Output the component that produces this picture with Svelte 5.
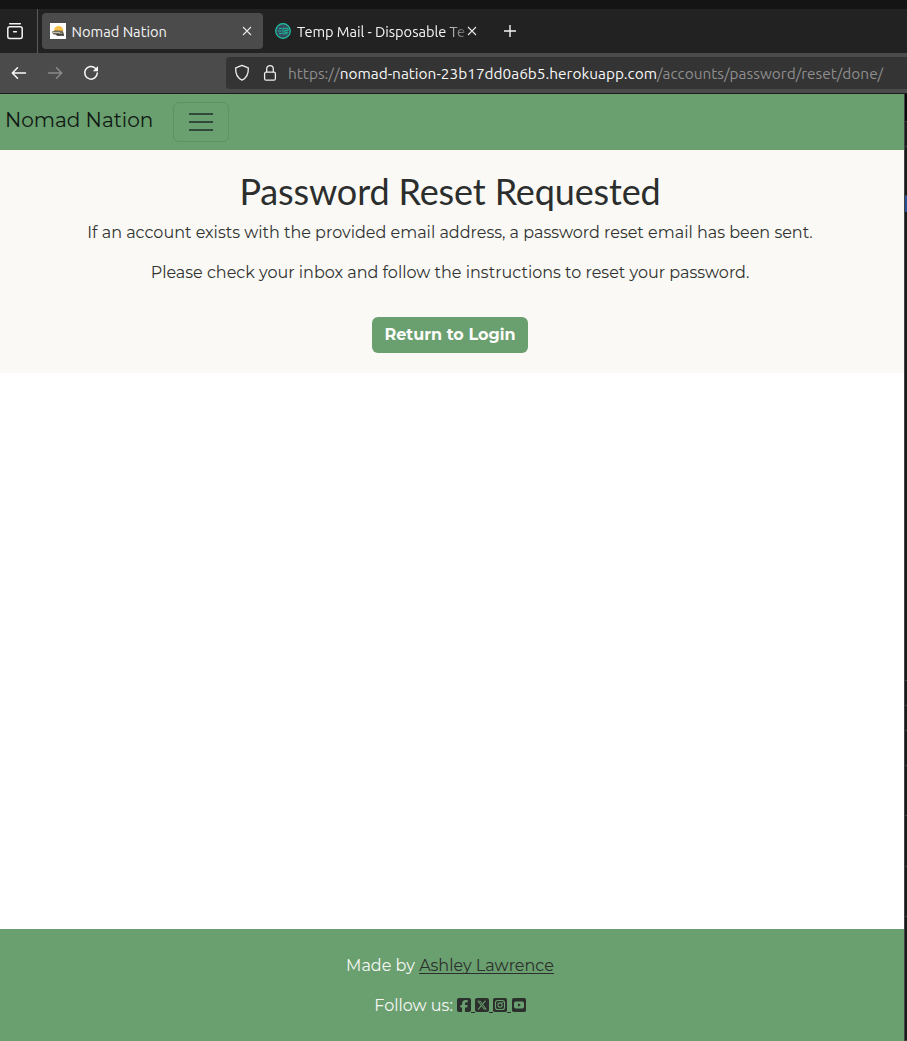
<script>
  const socials = ['facebook', 'x', 'instagram', 'youtube'];
</script>

<div class="window">
  <div class="strip"></div>
  <div class="tabs">
    <div class="recent">
      <svg width="18" height="18" viewBox="0 0 18 18" fill="none" stroke="#f4f4f4" stroke-width="1.5" stroke-linecap="round">
        <path d="M3.7 1.7h10.600" /><rect x="1.8" y="4.700" width="14.4" height="11.800" rx="2" /><path d="M7.6 9.700h2.8" />
      </svg>
    </div>
    <div class="tab active">
      <svg class="fav" width="16" height="16" viewBox="0 0 16 16">
        <path fill="#fff" d="M0 0h16v16H0z" />
        <path fill="#f5c34b" d="M4 7.500a4.700 4.600 0 0 1 9.400 0z" />
        <path fill="#d9a23d" d="M4 7h9v1.5H4z" />
        <path fill="#6d6a60" d="M2 8.5l4-1 7 .8 1 3.200-6 .8-5-1z" />
        <path fill="#c8c0ac" d="M3 9h7v1H3zM9 10.500h3v.8H9z" />
        <path fill="#302e29" d="M6 11.300h8v1.500H7z" />
      </svg>
      <span class="title t1">Nomad Nation</span>
      <svg class="close" width="10" height="10" viewBox="0 0 10 10"><path d="M1 1l8 8M9 1l-8 8" stroke="#e7e7e7" stroke-width="1.1" /></svg>
    </div>
    <div class="tab second">
      <svg class="fav" width="16" height="16" viewBox="0 0 16 16" fill="none">
        <circle cx="8" cy="8" r="7.3" fill="#374b60" stroke="#1dc9a2" stroke-width="1.2" />
        <path d="M4 5.500h3M3 8h3.500M4 10.500h3M8 5.300h5v2H9.800v2H13M8 5v5.800h4.500" stroke="#19b796" stroke-width="1" />
      </svg>
      <span class="title t2">Temp Mail - Disposable Te</span>
      <svg class="close" width="10" height="10" viewBox="0 0 10 10"><path d="M1 1l8 8M9 1l-8 8" stroke="#e7e7e7" stroke-width="1.1" /></svg>
    </div>
    <svg class="plus" width="12" height="12" viewBox="0 0 12 12"><path d="M6 0v12M0 6h12" stroke="#f4f4f4" stroke-width="1.4" /></svg>
  </div>
  <div class="toolbar">
    <svg class="back" width="16" height="14" viewBox="0 0 16 14" fill="none" stroke="#fafafa" stroke-width="1.5" stroke-linecap="round" stroke-linejoin="round"><path d="M14.5 7H1.5M6.5 1.8L1.3 7l5.2 5.2" /></svg>
    <svg class="fwd" width="16" height="14" viewBox="0 0 16 14" fill="none" stroke="#8a8a8a" stroke-width="1.5" stroke-linecap="round" stroke-linejoin="round"><path d="M1.5 7h13M9.5 1.8L14.7 7l-5.2 5.2" /></svg>
    <svg class="reload" width="16" height="16" viewBox="0 0 16 16"><path d="M12.3 3.2A6.3 6.3 0 1 0 14.3 8" fill="none" stroke="#fafafa" stroke-width="1.5" stroke-linecap="round" /><path d="M15 1v5.2h-5.2z" fill="#fafafa" /></svg>
    <div class="url">
      <svg class="shield" width="16" height="18" viewBox="0 0 16 18" fill="none" stroke="#eee" stroke-width="1.3" stroke-linejoin="round"><path d="M8 1.4l6.3 2.4c.3 5-1.3 10-6.3 12.4C3 13.800 1.400 8.800 1.700 3.800z" /></svg>
      <svg class="lock" width="14" height="18" viewBox="0 0 14 18" fill="none" stroke="#eee" stroke-width="1.3"><rect x="1.600" y="8.200" width="10.800" height="8" rx="1.500" /><path d="M3.700 8.200V4.900a3.300 3.300 0 0 1 6.600 0v3.300" /></svg>
      <span class="addr"><span class="u1">https://</span><span class="u2">nomad-nation-23b17dd0a6b5.herokuapp.com</span><span class="u3">/accounts/password/reset/done/</span></span>
    </div>
  </div>
  <div class="below">
    <div class="page">
      <nav>
        <span class="brand">Nomad Nation</span>
        <button class="toggle" aria-label="Menu"><svg width="24" height="18" viewBox="0 0 24 18"><path d="M0 1h24M0 9h24M0 17h24" stroke="#32493a" stroke-width="2" stroke-linecap="butt" /></svg></button>
      </nav>
      <main>
        <h1>Password Reset Requested</h1>
        <p class="p1">If an account exists with the provided email address, a password reset email has been sent.</p>
        <p class="p2">Please check your inbox and follow the instructions to reset your password.</p>
        <button class="login"><span>Return to Login</span></button>
      </main>
      <div class="blank"></div>
      <footer>
        <div class="made"><span class="m1">Made by</span><span class="m2">Ashley Lawrence</span></div>
        <div class="follow"><span class="f1">Follow us:</span>
          {#each socials as s}
            <span class="soc">
              {#if s === 'facebook'}
                <svg width="14" height="14" viewBox="0 32 448 448" fill="#2b302c"><path d="M64 32C28.7 32 0 60.7 0 96V416c0 35.3 28.7 64 64 64h98.2V334.2H109.4V256h52.8V222.3c0-87.1 39.4-127.500 125-127.500c16.200 0 44.200 3.200 55.700 6.400V172c-6-.6-16.500-1-29.600-1c-42 0-58.200 15.900-58.200 57.200V256h83.600l-14.400 78.200H255V480H384c35.300 0 64-28.700 64-64V96c0-35.300-28.700-64-64-64H64z" /></svg>
              {:else if s === 'x'}
                <svg width="14" height="14" viewBox="0 32 448 448" fill="#2b302c"><path d="M64 32C28.700 32 0 60.700 0 96V416c0 35.300 28.700 64 64 64H384c35.300 0 64-28.700 64-64V96c0-35.300-28.700-64-64-64H64zm297.100 84L257.300 234.600 379.400 396H283.800L209 298.100 123.300 396H75.800l111-126.900L69.700 116h98l67.700 89.500L313.600 116h47.500zM323.300 367.600L153.400 142.900H125.100L296.900 367.600h26.300z" /></svg>
              {:else}
                <svg width="14" height="14" viewBox="0 0 14 14" fill="none" stroke="#6a9f6f">
                  <rect width="14" height="14" rx="1.800" fill="#2b302c" stroke="none" />
                  {#if s === 'instagram'}
                    <rect x="2.500" y="2.500" width="9" height="9" rx="2.300" stroke-width="1.100" /><circle cx="7" cy="7" r="2.100" stroke-width="1.100" /><circle cx="9.700" cy="4.400" r=".6" fill="#6a9f6f" stroke="none" />
                  {:else}
                    <rect x="2" y="3.400" width="10" height="7.200" rx="1.800" fill="#6a9f6f" stroke="none" /><path d="M6 5.300v3.400L8.900 7z" fill="#2b302c" stroke="none" />
                  {/if}
                </svg>
              {/if}
            </span>
          {/each}
        </div>
      </footer>
    </div>
    <div class="edge">
      <i style="height:28px;background:#080808"></i><i style="height:25px"></i><i style="height:49px"></i>
      <i style="height:16px;background:#294f93;border:0"></i><i style="height:469px"></i>
      <i style="height:25px"></i><i style="height:25px"></i><i style="height:35px"></i><i style="height:50px"></i><i style="height:51px"></i><i style="height:50px"></i><i style="height:124px"></i>
    </div>
  </div>
</div>

<style>
  :global(body) { margin: 0; background: #fff; }
  * { box-sizing: border-box; }
  svg { display: block; flex: none; }
  .window { width: 907px; height: 1041px; overflow: hidden; display: flex; flex-direction: column; white-space: nowrap; }
  .strip { height: 9px; background: #141414; flex: none; }
  .tabs { height: 44px; background: #222; display: flex; align-items: center; flex: none; font: 14.670px/20px Ubuntu, "Noto Sans", sans-serif; color: #f4f4f4; }
  .recent { width: 38px; height: 44px; border-right: 1px solid #5a5a5a; padding: 13px 0 0 6px; }
  .tab { height: 36px; display: flex; align-items: center; border-radius: 4px; }
  .active { width: 221px; margin-left: 4px; background: #4b4b4b; padding: 0 11px 0 8px; }
  .second { width: 214px; margin-left: 4px; padding: 0 0 0 8px; }
  .title { flex: none; overflow: hidden; padding-top: 2px; }
  .t1 { width: 170px; margin-left: 5.500px; }
  .t2 { width: 170px; margin-left: 6px; letter-spacing: -.06px; -webkit-mask-image: linear-gradient(90deg, #000 147px, transparent 176px); }
  .plus { margin-left: 22.500px; }
  .toolbar { height: 41px; background: #4b4b4b; border-bottom: 1px solid #1c1c1c; display: flex; align-items: center; flex: none; padding-left: 11px; }
  .fwd { margin-left: 20px; }
  .reload { margin-left: 20px; }
  .url { width: 690px; flex: none; height: 32px; background: #343434; border-radius: 4px 0 0 4px; margin-left: 127px; display: flex; align-items: center; padding-left: 8px; }
  .lock { margin-left: 13px; }
  .addr { margin-left: 11px; padding-top: 2px; font: 15.400px/20px Ubuntu, "Noto Sans", sans-serif; color: #8e8e8e; display: flex; }
  .u2 { color: #f7f7f7; }
  .below { flex: 1; display: flex; }
  .page { width: 904px; display: flex; flex-direction: column; font: 16px/24px Montserrat, Inter, sans-serif; color: #303331; }
  nav { height: 56px; background: #6a9f6f; display: flex; align-items: center; padding-left: 5px; flex: none; }
  .brand { width: 168px; font-size: 20px; line-height: 30px; color: #101813; padding-bottom: 4px; }
  .toggle { width: 56px; height: 40px; border: 1px solid #609064; border-radius: 6px; background: none; padding: 0; display: grid; place-items: center; }
  main { height: 223px; background: #faf9f5; padding: 19px 4px 0 0; text-align: center; flex: none; display: flex; flex-direction: column; align-items: center; width: 904px; }
  h1 { font: 400 36px/44px Lato, sans-serif; letter-spacing: -.14px; margin: 0 0 8px; color: #2b2e2d; }
  p { margin: 0 0 16px; }
  .login { margin-top: 16px; width: 156px; height: 36px; background: #6a9f6f; border: 0; border-radius: 6px; color: #fcfcfa; font: 700 16px/24px Montserrat, Inter, sans-serif; padding: 0; }
  .blank { height: 556px; flex: none; background: #fff; }
  footer { height: 112px; background: #6a9f6f; color: #f7f8f5; padding: 25px 4px 0 0; display: flex; flex-direction: column; gap: 16px; align-items: center; }
  .made, .follow { display: flex; height: 24px; }
  .made { gap: 4.300px; }
  .m2 { color: #2b302c; text-decoration: underline; text-underline-offset: 2px; text-decoration-thickness: 1px; text-decoration-skip-ink: none; }
  .f1 { margin-right: 4px; }
  .soc { width: 18.300px; height: 19px; padding-top: 4px; background: linear-gradient(#2b302c, #2b302c) 14px 100% / 4.300px 1px no-repeat; }
  .soc:last-child { width: 14px; background: none; }
  .edge { width: 3px; border-left: 1px solid #444; background: #1b1b1b; }
  .edge i { display: block; border-bottom: 1px solid #3b3b3b; }
</style>
